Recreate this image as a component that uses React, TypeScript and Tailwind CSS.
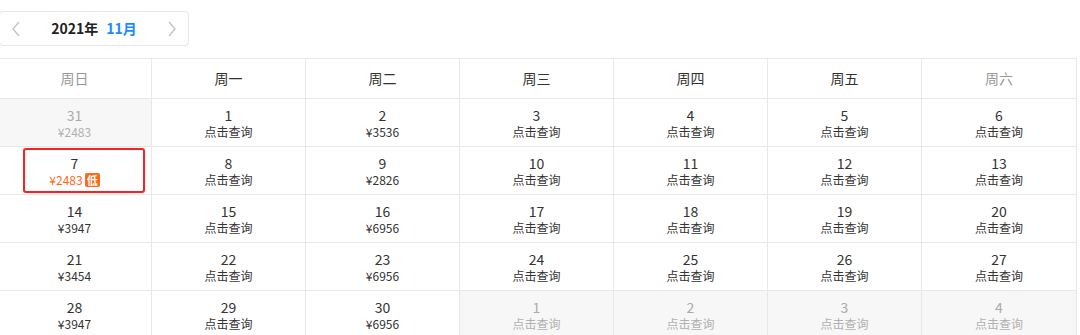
import React from "react";

type Cell = { day: number; sub: string; muted?: boolean; price?: boolean; low?: boolean };

const weekdays = ["周日", "周一", "周二", "周三", "周四", "周五", "周六"];

const q = "点击查询";
const rows: Cell[][] = [
    [
        { day: 31, sub: "¥2483", muted: true },
        { day: 1, sub: q }, { day: 2, sub: "¥3536", price: true }, { day: 3, sub: q },
        { day: 4, sub: q }, { day: 5, sub: q }, { day: 6, sub: q },
    ],
    [
        { day: 7, sub: "¥2483", low: true },
        { day: 8, sub: q }, { day: 9, sub: "¥2826", price: true }, { day: 10, sub: q },
        { day: 11, sub: q }, { day: 12, sub: q }, { day: 13, sub: q },
    ],
    [
        { day: 14, sub: "¥3947", price: true },
        { day: 15, sub: q }, { day: 16, sub: "¥6956", price: true }, { day: 17, sub: q },
        { day: 18, sub: q }, { day: 19, sub: q }, { day: 20, sub: q },
    ],
    [
        { day: 21, sub: "¥3454", price: true },
        { day: 22, sub: q }, { day: 23, sub: "¥6956", price: true }, { day: 24, sub: q },
        { day: 25, sub: q }, { day: 26, sub: q }, { day: 27, sub: q },
    ],
    [
        { day: 28, sub: "¥3947", price: true },
        { day: 29, sub: q }, { day: 30, sub: "¥6956", price: true },
        { day: 1, sub: q, muted: true }, { day: 2, sub: q, muted: true },
        { day: 3, sub: q, muted: true }, { day: 4, sub: q, muted: true },
    ],
];

const Chevron = ({ dir }: { dir: "l" | "r" }) => (
    <svg width="10" height="16" viewBox="0 0 10 16" fill="none" stroke="#c4c4c4" strokeWidth="1.4">
        {dir === "l" ? <path d="M8 1 L2 8 L8 15" /> : <path d="M2 1 L8 8 L2 15" />}
    </svg>
);

const DayCell = ({ c, last }: { c: Cell; last: boolean }) => {
    const bg = c.muted ? "bg-[#f7f7f7]" : "bg-white";
    const border = last ? "" : "border-r border-[#e8e8e8]";
    return (
        <div className={`relative h-[47px] pt-[2px] flex flex-col items-center justify-center ${bg} ${border}`}>
            {c.low && (
                <div className="absolute left-[25px] right-[6px] top-[1px] bottom-[1px] border-[2.5px] border-[#ff1f1f] rounded-[3px]" />
            )}
            <div className={`text-[14px] leading-[17px] ${c.muted ? "text-[#aaaaaa]" : "text-[#333333]"}`}>{c.day}</div>
            {c.low ? (
                <div className="flex items-center gap-[2px] text-[12px] leading-[16px] text-[#ff6a1a]">
                    <span>{c.sub}</span>
                    <span className="bg-[#ff6a1a] text-white rounded-[2px] text-[11px] leading-[14px] px-[2px] font-bold">低</span>
                </div>
            ) : (
                <div className={`text-[12px] leading-[16px] ${c.muted ? "text-[#b0b0b0]" : "text-[#333333]"}`}>{c.sub}</div>
            )}
        </div>
    );
};

export default function App() {
    return (
        <div className="w-[1080px] h-[335px] overflow-hidden bg-white" style={{ fontFamily: '"Noto Sans CJK SC", "Noto Sans", sans-serif' }}>
            <div className="pt-[11px] pl-0">
                <div className="w-[190px] h-[35px] -ml-[1px] border border-[#e6e6e6] rounded-[4px] flex items-center justify-between px-[11px]">
                    <Chevron dir="l" />
                    <div className="flex items-center gap-[8px] text-[14px] font-bold">
                        <span className="text-[#222222]">2021年</span>
                        <span className="text-[#1a8cff]">11月</span>
                    </div>
                    <Chevron dir="r" />
                </div>
            </div>
            <div className="mt-[12px] -ml-[2px] w-[1079px] border-t border-r border-[#e8e8e8]">
                <div className="grid grid-cols-7 border-b border-[#e8e8e8]">
                    {weekdays.map((w, i) => (
                        <div
                            key={w}
                            className={`h-[39px] flex items-center justify-center text-[14px] ${i === 0 || i === 6 ? "text-[#999999]" : "text-[#333333]"} ${i < 6 ? "border-r border-[#e8e8e8]" : ""}`}
                        >
                            {w}
                        </div>
                    ))}
                </div>
                {rows.map((r, ri) => (
                    <div key={ri} className="grid grid-cols-7 border-b border-[#e8e8e8]">
                        {r.map((c, ci) => (
                            <DayCell key={ci} c={c} last={ci === 6} />
                        ))}
                    </div>
                ))}
            </div>
        </div>
    );
}
